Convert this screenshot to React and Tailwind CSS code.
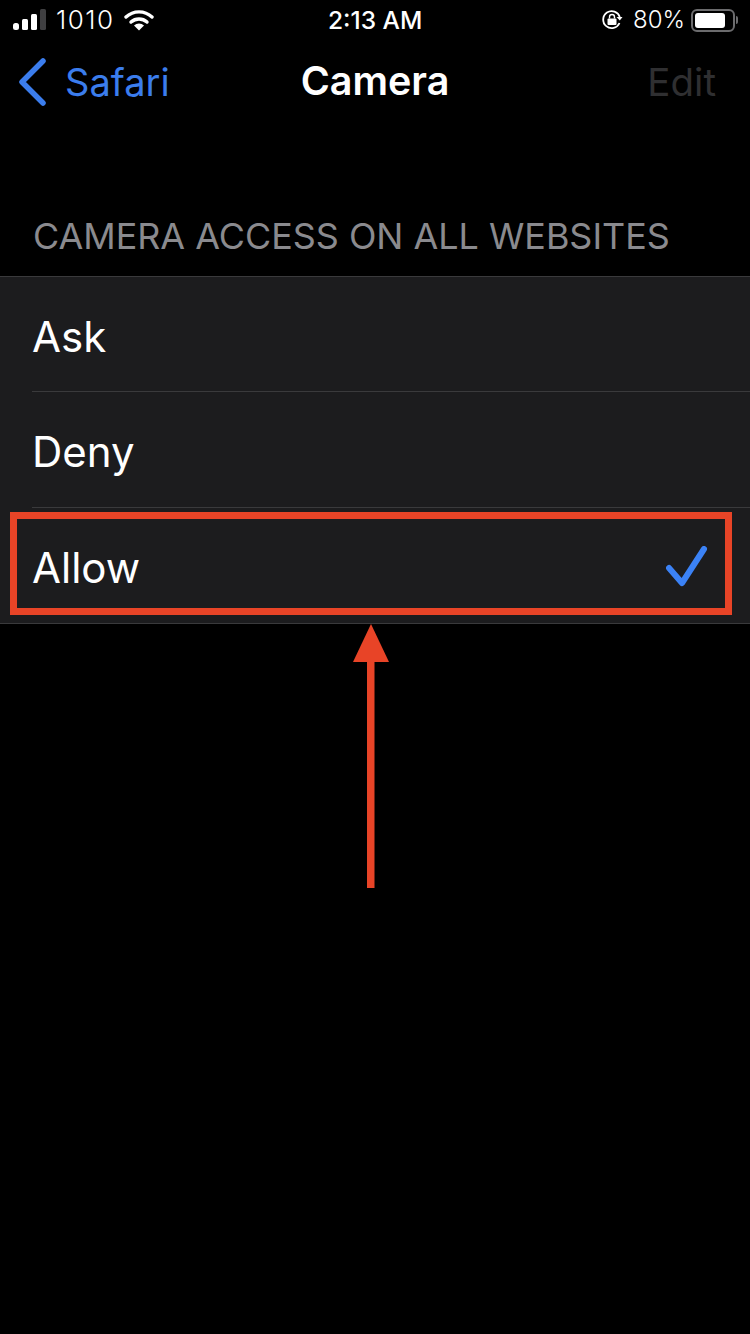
const font = "font-['Inter','Liberation_Sans',sans-serif]";

const StatusBar = () => (
    <div className="relative flex h-[40px] items-center justify-between pl-[13px] pr-[12px] text-white">
        <div className="flex items-center">
            <svg width="33" height="22" viewBox="0 0 33 22" className="mr-[10px]">
                <rect x="0" y="14" width="6" height="7" rx="2.5" fill="#fff" />
                <rect x="9" y="10" width="6" height="11" rx="1.5" fill="#fff" />
                <rect x="18" y="5" width="6" height="16" rx="1.5" fill="#fff" />
                <rect x="27" y="0" width="6" height="21" rx="1.5" fill="#3f3f41" />
            </svg>
            <span className="text-[26px] font-light tracking-[1.5px] leading-none">1010</span>
            <svg width="30" height="22" viewBox="0 0 30 22" className="ml-[9px]">
                <path d="M2 8 A19 19 0 0 1 28 8" fill="none" stroke="#fff" strokeWidth="3.4" strokeLinecap="round" />
                <path d="M7 13 A12 12 0 0 1 23 13" fill="none" stroke="#fff" strokeWidth="3.4" strokeLinecap="round" />
                <path d="M10 16.5 A7.5 7.5 0 0 1 20 16.5 L15 21.5 Z" fill="#fff" />
            </svg>
        </div>
        <span className="absolute left-[328px] text-[24.5px] font-medium leading-none">2:13 AM</span>
        <div className="flex items-center">
            <svg width="22" height="22" viewBox="0 0 22 22" className="mr-[10px]">
                <path d="M18.5 14 A8.5 8.5 0 1 1 18.8 8" fill="none" stroke="#fff" strokeWidth="1.8" />
                <path d="M15.5 8 L21.5 8 L18.8 11.5 Z" fill="#fff" />
                <rect x="6.5" y="9.5" width="9" height="6.5" rx="1" fill="#fff" />
                <path d="M8.5 9.5 V8 A2.5 2.5 0 0 1 13.5 8 V9.5" fill="none" stroke="#fff" strokeWidth="1.4" />
            </svg>
            <span className="text-[24px] font-light leading-none">80%</span>
            <div className="ml-[6px] flex h-[23px] w-[44px] items-center rounded-[6px] border-2 border-[#6b6b6d] p-[2px]">
                <div className="h-full w-[30px] rounded-[3px] bg-white" />
            </div>
            <div className="ml-[1px] h-[8px] w-[2px] rounded-r-sm bg-[#6b6b6d]" />
        </div>
    </div>
);

const Row = ({ label, border, checked, className }) => (
    <div className={`ml-[32px] flex items-center justify-between pr-[42px] ${border ? "border-b border-[#3a3a3c]" : ""} ${className}`}>
        <span className="pt-[5px] text-[42px] leading-none text-white">{label}</span>
        {checked && (
            <svg width="42" height="42" viewBox="0 0 42 42" className="mt-[2px]">
                <path d="M3 22 L16 37 L38 3" fill="none" stroke="#3b82f6" strokeWidth="6" strokeLinecap="round" strokeLinejoin="round" />
            </svg>
        )}
    </div>
);

export default function App() {
    return (
        <div className={`relative h-[1334px] w-[750px] overflow-hidden bg-black ${font}`}>
            <StatusBar />
            <div className="relative flex h-[84px] items-center justify-between pl-[17px] pr-[34px]">
                <div className="flex items-center text-[#3b7ded]">
                    <svg width="30" height="48" viewBox="0 0 30 48">
                        <path d="M26 3 L5 24 L26 45" fill="none" stroke="currentColor" strokeWidth="5.5" strokeLinecap="round" strokeLinejoin="round" />
                    </svg>
                    <span className="ml-[18px] text-[38px] leading-none">Safari</span>
                </div>
                <span className="absolute left-0 right-0 text-center text-[39.5px] font-semibold leading-none text-white">Camera</span>
                <span className="text-[38.5px] leading-none text-[#2f2f31]">Edit</span>
            </div>
            <div className="flex h-[152px] items-end pb-[21px] pl-[33px] text-[35.9px] leading-none text-[#8a8a8e]">
                CAMERA ACCESS ON ALL WEBSITES
            </div>
            <div className="border-y border-[#3a3a3c] bg-[#1c1c1e]">
                <Row label="Ask" border className="h-[115px]" />
                <Row label="Deny" border className="h-[116px]" />
                <Row label="Allow" checked className="h-[115px]" />
            </div>
            <div className="absolute left-[10px] top-[512px] h-[103px] w-[722px] border-[7px] border-[#e84427]" />
            <svg width="40" height="264" viewBox="0 0 40 264" className="absolute left-[351px] top-[624px]">
                <path d="M20 0 L38 38 L2 38 Z" fill="#e84427" />
                <rect x="16" y="36" width="7.5" height="228" fill="#e84427" />
            </svg>
        </div>
    );
}
